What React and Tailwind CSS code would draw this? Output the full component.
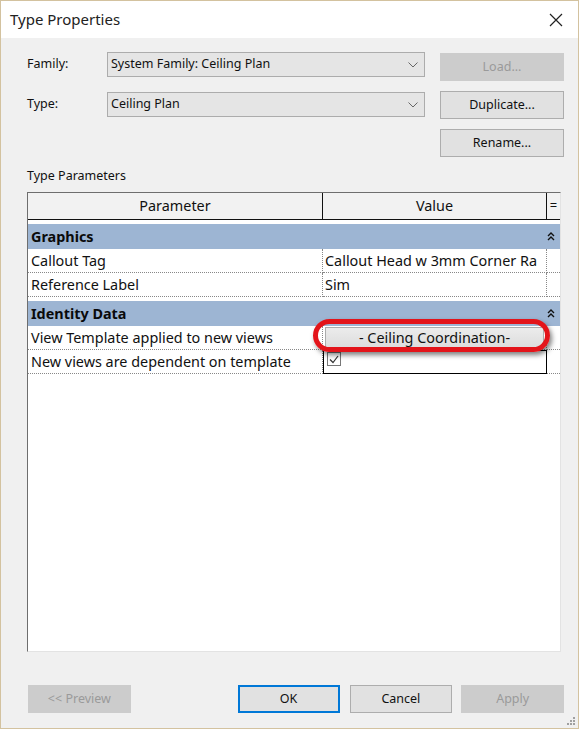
import React from 'react';

const font = { fontFamily: '"Noto Sans", "Open Sans", sans-serif' };

const Chevron = () => (
  <svg width="10" height="6" viewBox="0 0 10 6" className="text-[#666]">
    <path d="M0.5 0.5 L5 5 L9.5 0.5" fill="none" stroke="currentColor" strokeWidth="1" />
  </svg>
);

const Combo = ({ text }) => (
  <div className="w-[318px] h-[25px] bg-[#e5e5e5] border border-[#acacac] flex items-center justify-between pl-[3px] pr-[6px] text-[12.5px] text-[#111]">
    <span>{text}</span>
    <Chevron />
  </div>
);

const Btn = ({ children, disabled, primary, className = '' }) => (
  <div
    className={`h-[28px] flex items-center justify-center text-[12.5px] ${
      disabled
        ? 'bg-[#cccccc] border border-[#cccccc] text-[#9a9a9a]'
        : primary
        ? 'bg-[#e1e1e1] border-2 border-[#0078d7] text-[#111]'
        : 'bg-[#e1e1e1] border border-[#adadad] text-[#111]'
    } ${className}`}
  >
    {children}
  </div>
);

const UpUp = () => (
  <svg width="8" height="9" viewBox="0 0 8 9">
    <path d="M1 4 L4 1 L7 4 M1 8 L4 5 L7 8" fill="none" stroke="#111" strokeWidth="1.4" />
  </svg>
);

const GroupRow = ({ label }) => (
  <div className="pt-[4px] bg-white">
    <div className="h-[25px] bg-[#9db5d3] flex items-center justify-between pl-[3px] pr-[5px]">
      <span className="font-bold text-[14.4px] text-[#0a0a0a]">{label}</span>
      <UpUp />
    </div>
  </div>
);

const DataRow = ({ name, children, valueClass = '' }) => (
  <div className="flex h-[24px] bg-white text-[14.4px] text-[#111]">
    <div className="w-[295px] border-r border-b border-dotted border-[#888] pl-[3px] flex items-center">{name}</div>
    <div className={`w-[224px] border-r border-b border-dotted border-[#888] flex items-center ${valueClass}`}>{children}</div>
    <div className="flex-1 border-b border-dotted border-[#888]" />
  </div>
);

export default function App() {
  return (
    <div style={font} className="w-[579px] h-[729px] border border-[#d3c29f] flex flex-col bg-[#f0f0f0] overflow-hidden">
      {/* Title bar */}
      <div className="h-[37px] bg-white flex items-center justify-between pl-[9px] pr-[15px]">
        <span className="text-[15px] text-[#222]">Type Properties</span>
        <svg width="14" height="14" viewBox="0 0 14 14">
          <path d="M1 1 L13 13 M13 1 L1 13" stroke="#222" strokeWidth="1.2" />
        </svg>
      </div>

      {/* Body */}
      <div className="flex-1 relative pl-[26px] pr-[14px] pt-[14px]">
        <div className="flex">
          <div className="flex flex-col gap-[15px]">
            <div className="flex items-center">
              <span className="w-[80px] text-[12.5px] text-[#111]">Family:</span>
              <Combo text="System Family: Ceiling Plan" />
            </div>
            <div className="flex items-center">
              <span className="w-[80px] text-[12.5px] text-[#111]">Type:</span>
              <Combo text="Ceiling Plan" />
            </div>
          </div>
          <div className="ml-[15px] flex flex-col gap-[10px] pt-[1px]">
            <Btn disabled className="w-[124px]">Load...</Btn>
            <Btn className="w-[124px]">Duplicate...</Btn>
            <Btn className="w-[124px]">Rename...</Btn>
          </div>
        </div>

        <div className="mt-[9px] h-[20px] flex items-center text-[12.5px] text-[#111]">Type Parameters</div>

        {/* Table */}
        <div className="mt-[6px] w-[534px] h-[460px] border-l border-t border-[#6e6e6e] border-r border-b border-r-[#e3e3e3] border-b-[#e3e3e3] bg-white relative">
          <div className="flex h-[27px] bg-[#f2f2f2] border-b border-[#111] text-[14.4px] text-[#111]">
            <div className="w-[295px] border-r border-[#111] flex items-center justify-center">Parameter</div>
            <div className="w-[224px] border-r border-[#111] flex items-center justify-center">Value</div>
            <div className="flex-1 flex items-center justify-center text-[13px]">=</div>
          </div>

          <GroupRow label="Graphics" />
          <DataRow name="Callout Tag" valueClass="pl-[2px]">Callout Head w 3mm Corner Ra</DataRow>
          <DataRow name="Reference Label" valueClass="pl-[2px]">Sim</DataRow>
          <GroupRow label="Identity Data" />
          <DataRow name="View Template applied to new views" valueClass="px-[2px]">
            <div className="w-full h-[22px] bg-gradient-to-b from-[#ececec] to-[#dcdcdc] border border-[#acacac] flex items-center justify-center">
              - Ceiling Coordination-
            </div>
          </DataRow>
          <DataRow name="New views are dependent on template" valueClass="outline outline-1 outline-black -outline-offset-1 items-start pt-[2px] pl-[4px]">
            <div className="w-[14px] h-[14px] border border-[#777] bg-white flex items-center justify-center">
              <svg width="10" height="9" viewBox="0 0 10 9">
                <path d="M1 4.5 L4 7.5 L9 1" fill="none" stroke="#333" strokeWidth="1.2" />
              </svg>
            </div>
          </DataRow>

          {/* red highlight ring */}
          <div className="absolute left-[285px] top-[126px] w-[237px] h-[33px] rounded-full border-[5px] border-[#e3141a] shadow-[2px_3px_5px_rgba(0,0,0,0.5)]" />
        </div>

        {/* Bottom buttons */}
        <div className="mt-[33px] flex pl-[1px]">
          <Btn disabled className="w-[103px] h-[27px]">&lt;&lt; Preview</Btn>
          <Btn primary className="w-[102px] ml-[107px] h-[27px]">OK</Btn>
          <Btn className="w-[103px] ml-[10px] h-[27px]">Cancel</Btn>
          <Btn disabled className="w-[103px] ml-[9px] h-[27px]">Apply</Btn>
        </div>

        {/* resize grip */}
        <div className="absolute right-[3px] bottom-[3px] grid grid-cols-3 gap-[1px]">
          <span className="w-[2px] h-[2px]" />
          <span className="w-[2px] h-[2px]" />
          <span className="w-[2px] h-[2px] bg-[#a0a0a0]" />
          <span className="w-[2px] h-[2px]" />
          <span className="w-[2px] h-[2px] bg-[#a0a0a0]" />
          <span className="w-[2px] h-[2px] bg-[#a0a0a0]" />
          <span className="w-[2px] h-[2px] bg-[#a0a0a0]" />
          <span className="w-[2px] h-[2px] bg-[#a0a0a0]" />
          <span className="w-[2px] h-[2px] bg-[#a0a0a0]" />
        </div>
      </div>
    </div>
  );
}
